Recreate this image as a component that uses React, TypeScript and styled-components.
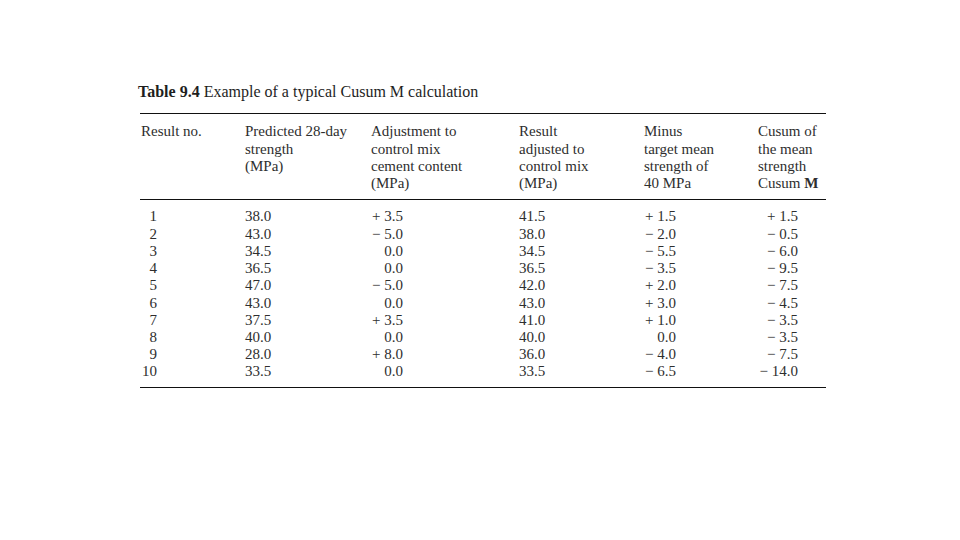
import React from 'react';
import styled, { createGlobalStyle } from 'styled-components';

const rows: [string, string, string, string, string, string][] = [
  ['1', '38.0', '+ 3.5', '41.5', '+ 1.5', '+ 1.5'],
  ['2', '43.0', '− 5.0', '38.0', '− 2.0', '− 0.5'],
  ['3', '34.5', '0.0', '34.5', '− 5.5', '− 6.0'],
  ['4', '36.5', '0.0', '36.5', '− 3.5', '− 9.5'],
  ['5', '47.0', '− 5.0', '42.0', '+ 2.0', '− 7.5'],
  ['6', '43.0', '0.0', '43.0', '+ 3.0', '− 4.5'],
  ['7', '37.5', '+ 3.5', '41.0', '+ 1.0', '− 3.5'],
  ['8', '40.0', '0.0', '40.0', '0.0', '− 3.5'],
  ['9', '28.0', '+ 8.0', '36.0', '− 4.0', '− 7.5'],
  ['10', '33.5', '0.0', '33.5', '− 6.5', '− 14.0'],
];

// width of the right-aligned number box per column (0 = left aligned)
const numWidth = [16, 0, 32, 0, 32, 40];

export default function App() {
  return (<>
    <GlobalStyle/>
    <Page>
      <Title><b>Table 9.4</b> Example of a typical Cusum M calculation</Title>
      <Table>
        <HeadRow>
          <Cell>Result no.</Cell>
          <Cell>Predicted 28-day<br/>strength<br/>(MPa)</Cell>
          <Cell>Adjustment to<br/>control mix<br/>cement content<br/>(MPa)</Cell>
          <Cell>Result<br/>adjusted to<br/>control mix<br/>(MPa)</Cell>
          <Cell>Minus<br/>target mean<br/>strength of<br/>40 MPa</Cell>
          <Cell>Cusum of<br/>the mean<br/>strength<br/>Cusum <b>M</b></Cell>
        </HeadRow>
        <Body>
          {rows.map((r) => (
            <DataRow key={r[0]}>
              {r.map((v, i) => (
                <Cell key={i}>
                  {numWidth[i] ? <Num $w={numWidth[i]}>{v}</Num> : v}
                </Cell>
              ))}
            </DataRow>
          ))}
        </Body>
      </Table>
    </Page>
  </>);
}

const GlobalStyle = createGlobalStyle`
  html, body {
    margin: 0;
    background: #ffffff;
  }
`;
const Page = styled.div`
  width: 960px;
  height: 540px;
  box-sizing: border-box;
  padding: 83px 0 0 140px;
  font-family: "Liberation Serif", "Times New Roman", serif;
  font-size: 15px;
  line-height: 17.3px;
  color: #2e2e2e;
`;
const Title = styled.div`
  margin-left: -2px;
  font-size: 16px;
  color: #1e1e1e;

  b {
    font-weight: 700;
  }
`;
const Table = styled.div`
  width: 686px;
  margin-top: 13px;
  border-top: 1px solid #111111;
  border-bottom: 1px solid #111111;
`;
const Row = styled.div`
  display: grid;
  grid-template-columns: 104px 126px 148px 125px 114px 69px;
`;
const HeadRow = styled(Row)`
  padding: 9px 0 7px 1px;
  border-bottom: 1px solid #111111;

  b {
    font-weight: 700;
  }
`;
const Body = styled.div`
  padding: 8px 0 6px 1px;
`;
const DataRow = styled(Row)`
  line-height: 17.2px;
`;
const Cell = styled.div`
  white-space: nowrap;
`;
const Num = styled.span<{ $w: number }>`
  display: inline-block;
  width: ${({ $w }) => $w}px;
  text-align: right;
`;
